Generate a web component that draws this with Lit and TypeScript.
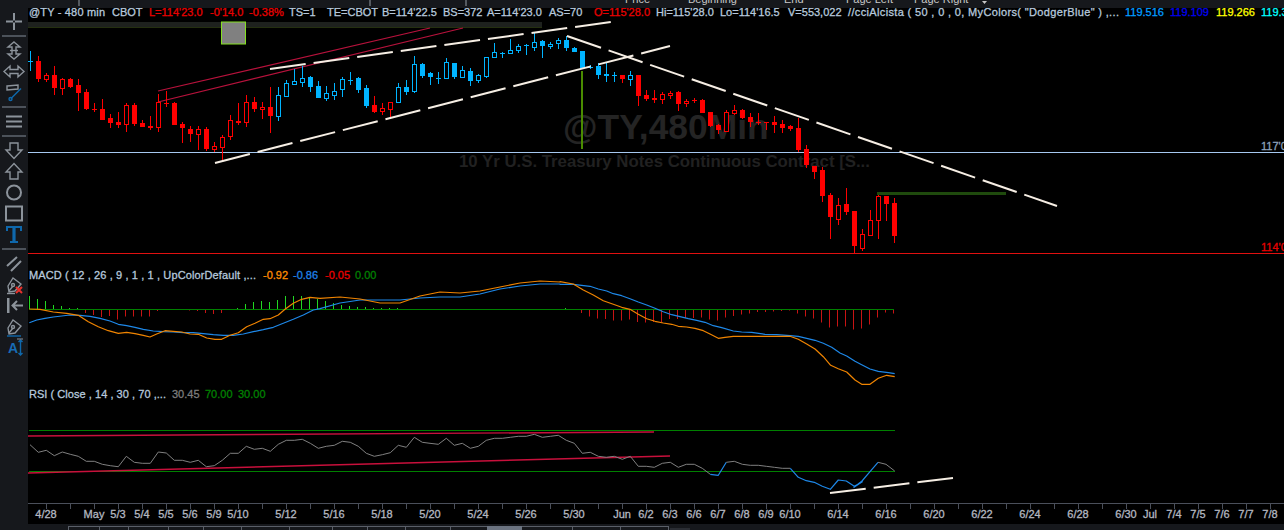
import { LitElement, html, css, svg } from "lit";
import { customElement } from "lit/decorators.js";

type C = [number, number, number, number, string];
const candles: C[] = [
[51,71,61,61,"c"],[56,82,61,79,"f"],[73,82,75,79,"h"],[66,95,75,88,"f"],[78,95,79,88,"h"],[78,88,79,87,"f"],[79,111,85,93,"f"],[89,110,92,109,"f"],
[103,112,109,109,"c"],[99,120,109,120,"f"],[114,128,118,123,"f"],[112,128,122,125,"f"],[103,132,105,124,"h"],[103,126,105,124,"f"],[120,127,123,127,"f"],[116,130,126,128,"f"],
[94,132,102,127,"h"],[91,107,103,103,"c"],[102,125,103,125,"f"],[122,143,124,128,"f"],[126,142,129,134,"f"],[126,150,129,134,"h"],[127,151,129,149,"f"],[142,152,146,149,"h"],
[135,161,137,147,"h"],[115,140,120,136,"h"],[103,125,121,123,"f"],[95,127,102,122,"h"],[97,112,102,109,"f"],[102,119,107,109,"h"],[87,133,107,116,"f"],[87,121,95,116,"h"],
[80,97,83,96,"h"],[69,84,81,84,"h"],[66,87,78,82,"h"],[76,92,77,87,"f"],[81,98,86,98,"f"],[86,101,93,98,"h"],[83,100,91,95,"h"],[77,97,79,89,"h"],
[72,85,80,80,"c"],[77,93,78,90,"f"],[85,108,88,106,"f"],[96,113,105,112,"f"],[103,115,108,111,"h"],[102,117,102,109,"h"],[83,103,87,102,"h"],[80,95,87,92,"f"],
[56,93,64,91,"h"],[63,78,64,76,"f"],[72,85,73,77,"f"],[72,84,78,78,"c"],[58,79,62,78,"h"],[63,79,63,77,"f"],[66,78,70,77,"h"],[68,86,71,81,"f"],
[74,83,75,80,"h"],[57,78,57,76,"h"],[43,58,52,57,"h"],[52,58,53,53,"c"],[39,54,50,53,"h"],[44,53,46,50,"h"],[44,55,45,45,"c"],[33,51,42,47,"h"],
[40,58,41,46,"f"],[42,49,44,46,"h"],[38,49,40,43,"h"],[36,51,40,48,"f"],[47,52,48,52,"f"],[51,68,51,68,"f"],[65,69,67,67,"c"],[63,79,66,75,"f"],
[63,82,74,76,"f"],[72,82,75,75,"c"],[75,83,75,79,"f"],[71,86,75,79,"h"],[75,106,75,96,"f"],[90,101,95,99,"f"],[90,103,98,100,"f"],[92,104,94,99,"h"],
[91,99,93,95,"h"],[91,111,92,104,"f"],[99,107,101,103,"h"],[98,103,100,100,"c"],[99,113,100,113,"f"],[112,127,112,126,"f"],[124,134,125,130,"f"],[110,132,112,131,"h"],
[105,115,110,113,"h"],[109,119,110,118,"f"],[113,127,117,122,"f"],[113,125,122,122,"c"],[122,130,122,122,"c"],[116,133,122,125,"f"],[120,133,124,128,"f"],[125,131,126,129,"f"],
[118,152,128,150,"f"],[145,168,149,165,"f"],[166,179,166,172,"f"],[167,202,170,196,"f"],[193,239,195,217,"f"],[198,225,205,219,"h"],[188,215,204,212,"f"],[211,253,211,246,"f"],
[229,251,234,248,"h"],[210,235,220,235,"h"],[193,239,196,220,"h"],[196,221,196,204,"f"],[198,243,203,236,"f"],
];
const isCyan = (i: number) => i === 0 || (i >= 31 && i <= 42) || (i >= 46 && i <= 73) || i === 75;

const hist: number[] = [13,10,8,4,3,1,1,-4,-6,-8,-7,-10.5,-7.5,-7.5,-7.5,-7.5,-2,-1,-1,-1,-1.5,-2,-4,-5,-4,-1,1,5,7,8,7,9,13,13,13,12,10,
8,6,4,3,2,2,1,1,1,1,0,0,-1,0,0,-1,0,0,-1,0,0,0,-1,0,0,0,0,0,0,0,1,
-1,-4,-7.5,-9.5,-10,-11.5,-11.5,-10.5,-13,-13.5,-13,-13,-10,-10,-9,-9,-8.5,-10.5,-11.5,-8.5,-7,-5.5,-4.5,-3,-3,-2.5,-2,-1.5,-4.5,-7.5,-9.5,-13.5,-18.5,-17.5,-17.5,-20.5,-19.5,-15.5,-8.5,-3.5,-4.5];

const pl = (pts: number[][], ox: number, oy: number, s = 3) => pts.map(([x, y]) => `${(ox + x / s).toFixed(1)},${(oy + y / s).toFixed(1)}`).join(" ");
const blueA = pl([[88,428],[110,420],[135,415],[160,411],[185,408],[210,405],[240,406],[270,409],[300,415],[330,423],[355,433],[380,437],[405,442],[430,448],[460,453],[490,455],[520,456],[550,458],[580,458],[610,461],[640,464],[670,466],[700,466],[730,462],[760,455],[790,449],[820,442],[850,430],[880,418],[910,405],[940,390],[960,386]],0,180);
const blueB = "340,303 360,300 380,300 400,300 420,298 440,297 460,297 480,294 500,289 520,286 540,284 560,284";
const blueC = pl([[0,73],[40,73],[90,79],[115,87],[140,93],[160,101],[185,107],[210,116],[235,126],[260,135],[285,145],[310,155],[335,164],[360,170],[385,176],[410,181],[435,187],[460,197],[485,203],[520,213],[545,216],[575,217],[615,223],[650,224],[690,227],[715,229],[740,235],[765,241],[790,250],[815,262],[840,279],[860,288],[885,304],[905,314],[930,327],[955,334],[985,338],[1004,341]],560,260);
const orA = pl([[88,387],[120,388],[160,396],[200,400],[235,406],[265,425],[295,440],[325,452],[355,460],[380,457],[405,461],[430,466],[450,471],[470,462],[495,452],[520,454],[545,456],[570,462],[595,463],[620,474],[645,478],[665,478],[690,466],[715,458],[740,440],[765,430],[790,418],[810,416],[835,405],[855,388],[880,370],[905,358],[930,352],[960,355]],0,180);
const orB = "340,297 360,299 380,303 400,303 420,296 440,292 460,293 480,291 500,287 520,283 540,281 560,282";
const orC = pl([[0,65],[40,72],[70,90],[100,105],[130,122],[160,133],[185,142],[210,148],[235,163],[260,176],[285,184],[310,189],[335,193],[355,199],[380,201],[405,205],[430,212],[450,222],[475,235],[495,232],[520,229],[620,229],[690,229],[715,238],[740,252],[765,267],[790,290],[812,316],[835,326],[860,336],[885,360],[905,373],[930,373],[955,355],[980,346],[1004,350]],560,260);

const rsiA = pl([[90,194],[115,217],[139,211],[163,227],[187,216],[211,223],[235,229],[259,244],[283,244],[307,253],[331,257],[355,260],[379,229],[403,247],[427,250],[451,250],[475,216],[499,219],[523,241],[547,241],[571,247],[595,241],[619,260],[643,257],[667,241],[691,220],[715,220],[739,199],[763,208],[787,205],[811,214],[835,193],[859,181],[883,181],[907,178],[931,190],[955,205],[979,199],[1003,196],[1027,184],[1051,187],[1075,199],[1099,220],[1123,229],[1147,224],[1171,218],[1195,196],[1219,202],[1243,172],[1267,187],[1290,190]],0,380);
const rsiB = pl([[25,193],[49,175],[73,196],[97,190],[121,205],[145,199],[169,181],[193,175],[217,175],[241,172],[265,169],[289,169],[313,163],[337,172],[361,169],[385,166],[409,181],[433,190],[457,220],[481,217],[505,229],[529,232],[553,229],[577,238],[601,229],[625,259],[649,259],[673,262],[697,250],[721,247],[745,262],[769,253],[793,253],[817,265],[841,283]],430,380);
const rsiC = pl([[889,247],[913,244],[937,253],[961,256],[985,256],[1009,259],[1033,262],[1057,265],[1081,265]],430,380);
const rsiBlue1 = pl([[841,283],[865,286],[889,247]],430,380);
const rsiBlue2 = pl([[1081,265],[1105,292],[1129,302],[1153,307],[1177,319],[1201,328],[1225,300],[1249,303],[1273,319],[1297,305]],430,380);
const rsiBlue3 = pl([[0,322],[24,303],[48,275],[72,247]],854,380);
const rsiEnd = pl([[72,247],[96,253],[122,273]],854,380);

type L = [number, number, string, string, number?];
const legend: L[] = [
[29,16,"@TY - 480 min","t",76],[112,16,"CBOT","t"],[149,16,"L=114'23.0","r"],[210,16,"-0'14.0","r"],[249,16,"-0.38%","r"],[289,16,"TS=1","t"],[327,16,"TE=CBOT","t"],[382,16,"B=114'22.5","t"],[443,16,"BS=372","t"],[487,16,"A=114'23.0","t"],[549,16,"AS=70","t"],[594,16,"O=115'28.0","r"],[656,16,"Hi=115'28.0","t"],[720,16,"Lo=114'16.5","t"],[788,16,"V=553,022","t"],
[848,16,'//cciAlcista ( 50 , 0 , 0, MyColors( "DodgerBlue" ) ,...',"t",271],[1125,16,"119.516","c1"],[1170,16,"119.109","c2"],[1216,16,"119.266","c3"],[1261,16,"119.3","c4"],
[29,279,"MACD ( 12 , 26 , 9 , 1 , 1 , UpColorDefault ,...","t",227],[263,279,"-0.92","o"],[293,279,"-0.86","c5"],[325,279,"-0.05","r"],[355,279,"0.00","g"],
[29,398,"RSI ( Close , 14 , 30 , 70 ,...","t",137],[172,398,"30.45","gr"],[205,398,"70.00","g"],[238,398,"30.00","g"],
];
const dates: [number, string][] = [[46,"4/28"],[94,"May"],[118,"5/3"],[142,"5/4"],[166,"5/5"],[190,"5/6"],[214,"5/9"],[238,"5/10"],[286,"5/12"],[334,"5/16"],[382,"5/18"],[430,"5/20"],[478,"5/24"],[526,"5/26"],[574,"5/30"],[622,"Jun"],[646,"6/2"],[670,"6/3"],[694,"6/6"],[718,"6/7"],[742,"6/8"],[766,"6/9"],[790,"6/10"],[838,"6/14"],[886,"6/16"],[934,"6/20"],[982,"6/22"],[1030,"6/24"],[1078,"6/28"],[1126,"6/30"],[1150,"Jul"],[1174,"7/4"],[1198,"7/5"],[1222,"7/6"],[1246,"7/7"],[1270,"7/8"]];
const ticks = Array.from({ length: 52 }, (_, i) => 46 + i * 24);
const sbTicks = [68,99,128,168,203,241,289,332,367,405,450,572,620,668];

const ic = (body: unknown) => html`<div class="row"><svg class="ico" width="24" height="21" viewBox="0 0 24 21">${body}</svg></div>`;
const sep = html`<div class="sep"></div>`;
const penNib = svg`<path class="s w15" d="M6 12 L11 4 L19 10 L13 17 L7 18 Z M7 17 L11 12"/><circle class="s w15" cx="11" cy="11" r="1.5"/>`;

@customElement("app-root")
export class AppRoot extends LitElement {
  static styles = css`
    :host { display: block; width: 1284px; height: 530px; overflow: hidden; background: #16181c; font-family: "Liberation Sans", Arial, sans-serif; }
    .top { display: block; height: 8px; }
    .mid { display: flex; height: 516px; }
    .side { width: 28px; flex: none; display: flex; flex-direction: column; padding-top: 3px; box-sizing: border-box; }
    .row { height: 21px; display: flex; justify-content: center; align-items: center; }
    .row svg { display: block; }
    .sep { height: 8px; display: flex; align-items: center; }
    .sep::before { content: ""; display: block; margin-left: 2px; width: 24px; height: 2px; background: #4c525a; }
    .chart { display: block; flex: none; background: #000; }
    .bottom { display: block; height: 6px; }
    .ico .s { fill: none; stroke: #8c939b; stroke-width: 1.8; }
    .ico .f { fill: #8c939b; stroke: none; }
    .ico .b { fill: none; stroke: #0f68ac; stroke-width: 2; }
    .ico .x { fill: none; stroke: #e8322c; stroke-width: 2; }
    .ico .a { fill: #186cb4; stroke: none; font: bold 14px "Liberation Sans", Arial, sans-serif; }
    .ico .w1 { stroke-width: 1; }
    .ico .w15 { stroke-width: 1.4; }
    .ico .w2 { stroke-width: 2; }
    .ico .w3 { stroke-width: 3.2; }
    text { font: 11px "Liberation Sans", Arial, sans-serif; stroke-width: .3px; }
    .t { fill: #b6c8dc; stroke: #b6c8dc; }
    .r { fill: #e80000; stroke: #e80000; }
    .o { fill: #ff8c00; stroke: #ff8c00; }
    .g { fill: #008000; stroke: #008000; }
    .gr { fill: #7d7d7d; stroke: #7d7d7d; }
    .c1 { fill: #009cff; stroke: #009cff; }
    .c2 { fill: #0000f0; stroke: #0000f0; }
    .c3 { fill: #ffff00; stroke: #ffff00; }
    .c4 { fill: #00ffff; stroke: #00ffff; }
    .c5 { fill: #1e80e8; stroke: #1e80e8; }
    .date { fill: #b4b8c0; stroke: #b4b8c0; text-anchor: middle; }
    .wm1 { font: bold 35.4px "Liberation Sans", Arial, sans-serif; fill: #242424; stroke: none; }
    .wm2 { font: bold 16.8px "Liberation Sans", Arial, sans-serif; fill: #212121; stroke: none; }
    .menu { fill: #c8c8c8; stroke: none; font-size: 11px; }
    .lbl { fill: #8ea2bc; stroke: #8ea2bc; }
    .red { fill: #e80000; stroke: #e80000; }
    .dash { fill: none; stroke: #f6eee4; stroke-width: 2; stroke-dasharray: 36 8; }
    .tr { fill: none; stroke: #b8123c; stroke-width: 1.2; }
    .tr2 { fill: none; stroke: #c8103c; stroke-width: 1.4; }
    .l { fill: none; stroke-linejoin: round; }
    .lb { stroke: #1e88e8; stroke-width: 1.2; }
    .lo { stroke: #f08400; stroke-width: 1.2; }
    .lg { stroke: #808080; stroke-width: 1; }
    .ls { stroke: #1e88e8; stroke-width: 1.2; }
  `;

  private candle(c: C, i: number) {
    const x = 30 + i * 8;
    const col = isCyan(i) ? "#00b4ff" : "#ff0000";
    const [hi, lo, top, bot, type] = c;
    const wick = svg`<rect x=${x} y=${hi} width="1" height=${lo - hi} fill=${col} />`;
    if (type === "c") return svg`${wick}<rect x=${x - 2} y=${top} width="5" height="1" fill=${col} />`;
    if (type === "h") return svg`${wick}<rect x=${x - 1.5} y=${top + 0.5} width="4" height=${bot - top} fill="#000" stroke=${col} stroke-width="1" />`;
    return svg`${wick}<rect x=${x - 2} y=${top} width="5" height=${bot - top} fill=${col} />`;
  }

  render() {
    return html`
      <svg class="top" width="1284" height="8" viewBox="0 0 1284 8">
        <text class="menu" x="625" y="3">Price</text>
        <text class="menu" x="688" y="3">Beginning</text>
        <text class="menu" x="784" y="3">End</text>
        <text class="menu" x="846" y="3">Page Left</text>
        <text class="menu" x="914" y="3">Page Right</text>
        <path d="M982 1h5l-2.500 3z" fill="#c8c8c8" />
        <rect x="78" y="0" width="2" height="6" fill="#555a60" />
        <rect x="369" y="0" width="2" height="6" fill="#555a60" />
        <rect x="465" y="0" width="2" height="6" fill="#555a60" />
      </svg>
      <div class="mid">
        <div class="side">
          ${ic(svg`<path class="s w2" d="M12 2v7.500M12 11.500V19M4 10.500h7M13 10.500h7"/>`)}
          ${sep}
          ${ic(svg`<path class="s w15" d="M12 2 L18 7 H14 V14 H18 L12 19 L6 14 H10 V7 H6 Z"/><path class="s w15" d="M8 10.500h8"/>`)}
          ${ic(svg`<path class="s w15" d="M2 10.500 L8 5 V8.500 H16 V5 L22 10.500 L16 16 V12.500 H8 V16 Z"/>`)}
          ${ic(svg`<path class="s w15" d="M5 4 L16 3 L16 7 L5 8 Z"/><path class="b w15" d="M9 16.500 L19 6.500"/><circle class="b w15" cx="8.500" cy="17" r="1.500"/>`)}
          ${sep}
          ${ic(svg`<path class="s w2" d="M4 5.500h16M4 10.500h16M4 15.500h16"/>`)}
          ${sep}
          ${ic(svg`<path class="s w15" d="M8 3 H16 V10 H20 L12 18.500 L4 10 H8 Z"/>`)}
          ${ic(svg`<path class="s w15" d="M8 18 H16 V11 H20 L12 2.500 L4 11 H8 Z"/>`)}
          ${ic(svg`<circle class="s w2" cx="12" cy="10.500" r="7"/>`)}
          ${ic(svg`<rect class="s w2" x="4" y="3.500" width="16" height="14"/>`)}
          ${ic(svg`<path class="b" d="M5 7 V3 H19 V7 M8 18 H16"/><path class="b w3" d="M12 4 V18"/>`)}
          ${sep}
          ${ic(svg`<path class="s w2" d="M5 13 L15 4 M9 18 L19 8"/>`)}
          ${ic(svg`${penNib}<path class="s w15" d="M5 19.500h8"/><path class="x" d="M14 13 L20 19 M20 13 L14 19"/>`)}
          ${ic(svg`<rect class="f" x="5" y="3" width="2.500" height="15"/><path class="s w2" d="M21 10.500 H11 M15 6 L10.500 10.500 L15 15"/>`)}
          ${ic(svg`${penNib}<path class="b w15" d="M5 20h14"/>`)}
          ${ic(svg`<text class="a" x="6" y="16">A</text><path class="b w15" d="M18.500 3 V18 M16.500 5 L18.500 3 L20.500 5 M16.500 16 L18.500 18 L20.500 16"/><path class="s w1" d="M15 2h6"/>`)}
        </div>
        <svg class="chart" width="1256" height="516" viewBox="28 8 1256 516">
          <text class="wm1" x="563" y="139">@TY,480Min</text>
          <text class="wm2" x="459" y="167">10 Yr U.S. Treasury Notes Continuous Contract [S...</text>

          <rect x="28" y="22" width="514" height="5" fill="#1e211e" />
          <rect x="28" y="27" width="514" height="1" fill="#253010" />
          <rect x="221.500" y="22" width="24" height="22" fill="#808080" stroke="#84e020" />

          <rect x="28" y="152" width="1256" height="1" fill="#a6c8f0" />
          <rect x="28" y="253" width="1256" height="1" fill="#e01010" />
          <path class="tr" d="M158 91 L430 28" />
          <path class="tr" d="M158 102 L463 28" />
          <rect x="581" y="71" width="2" height="78" fill="#4a8c00" />

          ${candles.map((c, i) => this.candle(c, i))}

          <rect x="877" y="192" width="129" height="3" fill="#1f4a0d" />
          <path class="dash" d="M215 163 L670 46" />
          <path class="dash" d="M270 69 L611 22" />
          <path class="dash" d="M567 36 L1057 206" />

          <text class="lbl" x="1261" y="150">117'0</text>
          <text class="red" x="1261" y="251">114'0</text>

          ${legend.map(([x, y, s, c, w]) => w
            ? svg`<text class=${c} x=${x} y=${y} textLength=${w} lengthAdjust="spacing">${s}</text>`
            : svg`<text class=${c} x=${x} y=${y}>${s}</text>`)}

          ${hist.map((h, i) => svg`<rect x=${29 + i * 8} y=${h > 0 ? 309 - h : 309} width="1" height=${Math.abs(h)} fill=${h > 0 ? "#22d822" : "#c81414"} />`)}
          <rect x="29" y="309" width="865" height="1" fill="#008000" />
          <polyline class="l lb" points=${blueA + " " + blueB + " " + blueC} />
          <polyline class="l lo" points=${orA + " " + orB + " " + orC} />

          <rect x="29" y="430" width="866" height="1" fill="#008000" />
          <rect x="29" y="471" width="866" height="1" fill="#008000" />
          <path class="tr2" d="M28 436 L654 432" />
          <path class="tr2" d="M28 473 L670 456" />
          <polyline class="l lg" points=${rsiA + " " + rsiB} />
          <polyline class="l ls" points=${rsiBlue1} />
          <polyline class="l lg" points=${rsiC} />
          <polyline class="l ls" points=${rsiBlue2 + " " + rsiBlue3} />
          <polyline class="l lg" points=${rsiEnd} />
          <path class="dash" d="M830 493 L953 478" />

          <rect x="28" y="503" width="1256" height="1" fill="#4a4f5a" />
          ${ticks.map((x) => svg`<rect x=${x} y="503" width="1" height="6" fill="#4a4f5a" />`)}
          ${dates.map(([x, s]) => svg`<text class="date" x=${x} y="518">${s}</text>`)}
        </svg>
      </div>
      <svg class="bottom" width="1284" height="6" viewBox="0 524 1284 6">
        <rect x="68" y="526" width="601" height="1" fill="#5a5f68" />
        ${sbTicks.map((x) => svg`<rect x=${x} y="526" width="1" height="4" fill="#5a5f68" />`)}
        <rect x="487" y="526" width="35" height="4" fill="#6b7380" />
        <rect x="670" y="528" width="20" height="2" fill="#2a2d33" />
      </svg>
    `;
  }
}
